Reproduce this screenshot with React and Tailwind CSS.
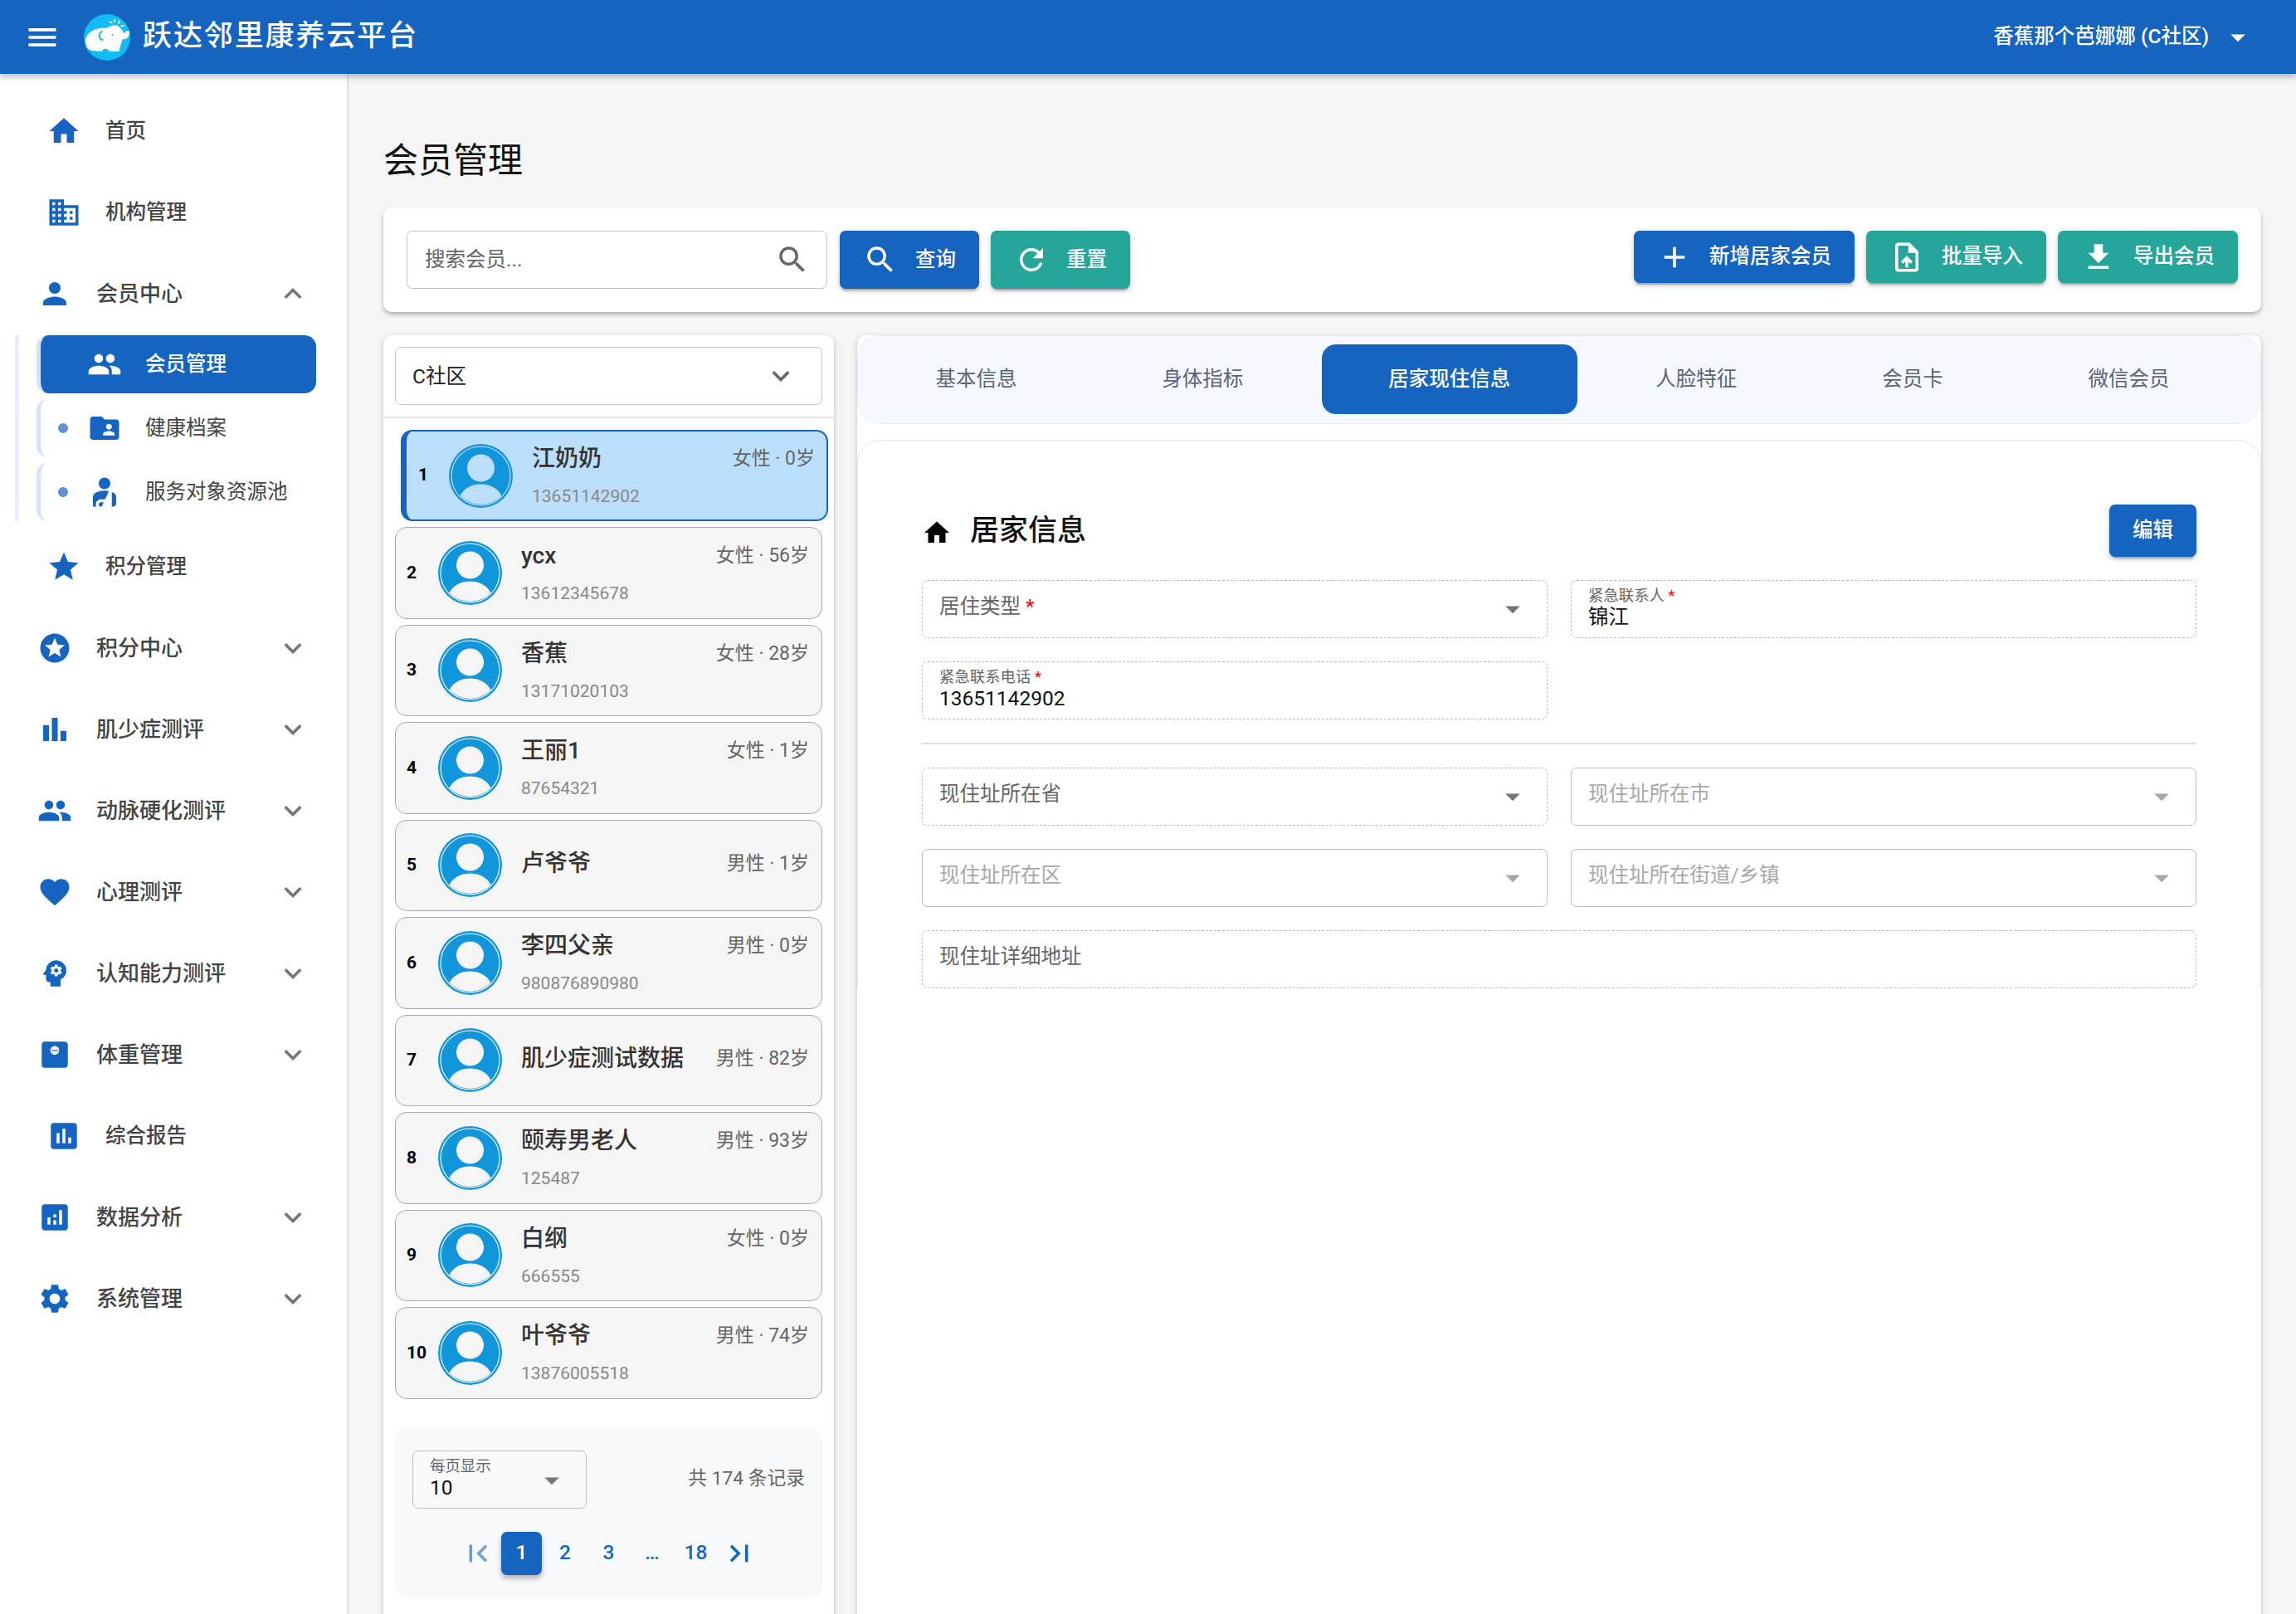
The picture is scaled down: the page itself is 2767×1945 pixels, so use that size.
import React from "react";
import {
  MdMenu, MdHome, MdDomain, MdPerson, MdPeople, MdFolderShared, MdPersonalInjury, MdStar, MdStars,
  MdBarChart, MdFavorite, MdPsychology, MdMonitorWeight, MdAssessment, MdAnalytics, MdSettings,
  MdExpandMore, MdExpandLess, MdArrowDropDown, MdSearch, MdRefresh, MdAdd, MdUploadFile, MdFileDownload,
  MdFirstPage, MdLastPage,
} from "react-icons/md";

const topItems = [
  { label: "积分中心", Icon: MdStars },
  { label: "肌少症测评", Icon: MdBarChart },
  { label: "动脉硬化测评", Icon: MdPeople },
  { label: "心理测评", Icon: MdFavorite },
  { label: "认知能力测评", Icon: MdPsychology },
  { label: "体重管理", Icon: MdMonitorWeight },
  { label: "综合报告", Icon: MdAssessment, leaf: true },
  { label: "数据分析", Icon: MdAnalytics },
  { label: "系统管理", Icon: MdSettings },
];

const members = [
  { name: "江奶奶", info: "女性 · 0岁", phone: "13651142902" },
  { name: "ycx", info: "女性 · 56岁", phone: "13612345678" },
  { name: "香蕉", info: "女性 · 28岁", phone: "13171020103" },
  { name: "王丽1", info: "女性 · 1岁", phone: "87654321" },
  { name: "卢爷爷", info: "男性 · 1岁", phone: "" },
  { name: "李四父亲", info: "男性 · 0岁", phone: "980876890980" },
  { name: "肌少症测试数据", info: "男性 · 82岁", phone: "" },
  { name: "颐寿男老人", info: "男性 · 93岁", phone: "125487" },
  { name: "白纲", info: "女性 · 0岁", phone: "666555" },
  { name: "叶爷爷", info: "男性 · 74岁", phone: "13876005518" },
];

const tabs = ["基本信息", "身体指标", "居家现住信息", "人脸特征", "会员卡", "微信会员"];

const Logo = () => (
  <svg width="56" height="56" viewBox="20 20 168 168" className="shrink-0">
    <circle cx="104" cy="104" r="84" fill="#12bdf6" />
    <path
      d="M28 130C20 105 40 78 75 72C90 68 100 72 108 68C125 55 150 60 160 80C164 90 172 92 172 80L184 80C188 100 175 115 160 110C156 125 150 140 148 155L112 155C108 145 95 142 88 150L84 155L50 152C40 148 30 145 28 130Z"
      fill="#fff"
    />
    <path d="M88 82C72 88 72 110 90 114" fill="none" stroke="#12bdf6" strokeWidth="6" />
    <circle cx="124" cy="95" r="3" fill="#12bdf6" />
    <g fill="#fff">
      <ellipse cx="118" cy="49" rx="6" ry="3" />
      <ellipse cx="131" cy="44" rx="3" ry="7" />
      <ellipse cx="147" cy="49" rx="3" ry="7" />
      <ellipse cx="160" cy="62" rx="7" ry="3" />
      <ellipse cx="140" cy="63" rx="3" ry="4" />
    </g>
  </svg>
);

const Avatar = ({ light }) => (
  <svg width="77" height="77" viewBox="-38.5 -38.5 77 77" className="shrink-0">
    <circle r="38.5" fill="#1296db" />
    <circle r="35.5" fill="none" strokeWidth="1.2" className={light} stroke="currentColor" />
    <circle cy="-9.5" r="16.5" fill="currentColor" className={light} />
    <path d="M-25 24C-20 14-10 10 0 10C10 10 20 14 25 24A35 35 0 0 1-25 24Z" fill="currentColor" className={light} />
  </svg>
);

const NavRow = ({ label, Icon, leaf, open }) => (
  <div className={`flex h-[84px] items-center mb-[14px] pr-[44px] ${leaf ? "pl-[56px]" : "pl-[45px]"}`}>
    <Icon size={42} className="text-[#1565c0] shrink-0" />
    {leaf ? (
      <span className="ml-[29px] flex-1 pt-[1px] text-[24.5px] font-medium text-[#444]">{label}</span>
    ) : (
      <span className="ml-[29px] flex-1 text-[26px] font-medium text-[#444]">{label}</span>
    )}
    {!leaf && (open ? <MdExpandLess size={42} className="text-[#757575]" /> : <MdExpandMore size={42} className="text-[#757575]" />)}
  </div>
);

const SubRow = ({ label, Icon, active }) => (
  <div
    className={`flex h-[70px] items-center rounded-[14px] border-l-[5px] border-[#d6e2f6] pl-[21px] ${
      active ? "bg-[#1565c0] text-white" : "text-[#444]"
    }`}
  >
    <span className={`size-[12px] rounded-full bg-[#5e92d3] ${active ? "invisible" : ""}`} />
    <Icon size={42} className={`ml-[23px] ${active ? "text-white" : "text-[#1565c0]"}`} />
    <span className={`ml-[28px] text-[24.5px] ${active ? "font-medium" : ""}`}>{label}</span>
  </div>
);

const ActionButton = ({ Icon, label, color, tall }) => (
  <button
    className={`flex items-center gap-[21px] whitespace-nowrap rounded-[7px] px-[28px] text-[24.5px] font-medium text-white shadow-[0_5px_2px_-3px_rgba(0,0,0,0.2),0_3px_4px_0_rgba(0,0,0,0.14),0_2px_9px_0_rgba(0,0,0,0.12)] ${color} ${
      tall ? "h-[70px]" : "h-[63px]"
    }`}
  >
    <Icon size={42} />
    {label}
  </button>
);

const MemberItem = ({ index, member, active }) => (
  <div
    className={`flex items-center rounded-[14px] ${
      active
        ? "h-[110px] translate-x-[7px] border-y-2 border-r-2 border-l-[7px] border-[#1565c0] bg-[#bbdefb] pl-[14px] pr-[14px]"
        : "h-[110.5px] border-[1.75px] border-[#a8a8a8] bg-[#f5f5f5] pl-[13px] pr-[15px]"
    }`}
  >
    <span className={`shrink-0 text-[21px] font-bold text-black ${active ? "w-[37px]" : "w-[38px]"}`}>{index}</span>
    <Avatar light={active ? "text-[#bbdefb]" : "text-[#f5f5f5]"} />
    <div className="ml-[23px] min-w-0 flex-1">
      <div className={`flex h-[39px] items-center justify-between ${member.phone ? "pt-[1px]" : "pb-[3px]"}`}>
        <span className="text-[28px] font-medium text-[#333]">{member.name}</span>
        <span className="text-[23px] text-[#666]">{member.info}</span>
      </div>
      {member.phone && (
        <div className="mt-[11px] h-[30px] text-[21px] leading-[30px] text-[#888]">{member.phone}</div>
      )}
    </div>
  </div>
);

const SelectField = ({ label, required, disabled, dashed }) => (
  <div
    className={`flex h-[70px] items-center justify-between rounded-[7px] border pl-[20px] pr-[20px] ${
      dashed ? "border-dashed border-[#bdbdbd]" : "border-[#bdbdbd]"
    }`}
  >
    <span className={`pb-[5px] text-[24.5px] ${disabled ? "text-[#a8a8a8]" : "text-[#666]"}`}>
      {label}
      {required && <span className="text-[#f00]"> *</span>}
    </span>
    <MdArrowDropDown size={42} className={disabled ? "text-[#a8a8a8]" : "text-[#757575]"} />
  </div>
);

const TextField = ({ label, value }) => (
  <div className="flex h-[70px] flex-col rounded-[7px] border border-dashed border-[#bdbdbd] pl-[20px] pt-[6px]">
    <span className="text-[18.4px] leading-[24px] text-[#666]">
      {label}
      <span className="text-[#f00]"> *</span>
    </span>
    <span className="text-[24.5px] leading-[28px] text-[#111]">{value}</span>
  </div>
);

const PageButton = ({ children, current, dim }) => (
  <button
    className={`flex h-[52px] w-[49px] items-center justify-center rounded-[7px] text-[24.5px] font-medium ${
      current ? "bg-[#1565c0] text-white shadow-[0_4px_6px_rgba(0,0,0,0.3)]" : "text-[#1565c0]"
    } ${dim ? "opacity-60" : ""}`}
  >
    {children}
  </button>
);

export default function App() {
  return (
    <div className="flex h-screen flex-col overflow-hidden bg-[#f5f5f5] [font-family:Roboto,'Noto_Sans_CJK_SC',sans-serif]">
      {/* top bar */}
      <header className="relative z-10 flex h-[89px] shrink-0 items-center bg-[#1565c0] pl-[29px] pr-[49px] text-white shadow-[0_4px_7px_rgba(0,0,0,0.25)]">
        <MdMenu size={44} />
        <div className="ml-[28px]"><Logo /></div>
        <span className="ml-[15px] flex-1 text-[35px] font-medium tracking-[1.9px]">跃达邻里康养云平台</span>
        <span className="text-[24.5px] font-medium">香蕉那个芭娜娜 (C社区)</span>
        <MdArrowDropDown size={42} className="ml-[14px]" />
      </header>

      <div className="flex min-h-0 flex-1">
        {/* sidebar */}
        <aside className="w-[420px] shrink-0 border-r-2 border-[#e0e0e0] bg-white pt-[27px]">
          <NavRow label="首页" Icon={MdHome} leaf />
          <NavRow label="机构管理" Icon={MdDomain} leaf />
          <div className="pb-[13px]">
            <div className="mb-[-6px]"><NavRow label="会员中心" Icon={MdPerson} open /></div>
            <div className="ml-[18px] flex w-[363px] flex-col gap-[7px] border-l-[5px] border-[#e6eefb] pl-[21px]">
              <SubRow label="会员管理" Icon={MdPeople} active />
              <SubRow label="健康档案" Icon={MdFolderShared} />
              <SubRow label="服务对象资源池" Icon={MdPersonalInjury} />
            </div>
          </div>
          <NavRow label="积分管理" Icon={MdStar} leaf />
          {topItems.map((item) => (
            <NavRow key={item.label} {...item} />
          ))}
        </aside>

        {/* main */}
        <main className="min-w-0 flex-1 pl-[42px] pr-[42px]">
          <h1 className="mt-[77px] h-[56px] text-[42px] leading-[56px] text-[#111]">会员管理</h1>

          <div className="mt-[28px] flex items-start rounded-[10px] bg-white p-[28px] shadow-[0_3px_5px_rgba(0,0,0,0.28)]">
            <div className="flex h-[70px] w-[507px] items-center justify-between rounded-[7px] border-[1.5px] border-[#c4c4c4] pl-[21px] pr-[20px]">
              <span className="text-[24.5px] text-[#666]">搜索会员...</span>
              <MdSearch size={42} className="text-[#666]" />
            </div>
            <div className="ml-[15px]"><ActionButton Icon={MdSearch} label="查询" color="bg-[#1565c0]" tall /></div>
            <div className="ml-[14px]"><ActionButton Icon={MdRefresh} label="重置" color="bg-[#26a69a]" tall /></div>
            <div className="ml-auto flex gap-[14px]">
              <ActionButton Icon={MdAdd} label="新增居家会员" color="bg-[#1565c0]" />
              <ActionButton Icon={MdUploadFile} label="批量导入" color="bg-[#26a69a]" />
              <ActionButton Icon={MdFileDownload} label="导出会员" color="bg-[#26a69a]" />
            </div>
          </div>

          <div className="mt-[28px] flex min-h-[1600px] items-stretch gap-[28px]">
            {/* member list */}
            <section className="w-[543px] shrink-0 rounded-[10px] bg-white shadow-[0_2px_6px_rgba(0,0,0,0.22)]">
              <div className="px-[14px] pt-[14px]">
                <div className="flex h-[70px] items-center justify-between rounded-[7px] border-[1.5px] border-[#c4c4c4] pl-[20px] pr-[28px]">
                  <span className="pt-[2px] text-[24.5px] text-[#222]">C社区</span>
                  <MdExpandMore size={42} className="text-[#666]" />
                </div>
              </div>
              <div className="mt-[14px] h-[2px] bg-[#e4e4e4]" />
              <div className="flex flex-col gap-[7px] px-[14px] pt-[14px]">
                {members.map((m, i) => (
                  <MemberItem key={m.name} index={i + 1} member={m} active={i === 0} />
                ))}
              </div>
              <div className="mx-[14px] mt-[34px] rounded-[14px] bg-[#f8f9fa] px-[21px] py-[28px]">
                <div className="flex items-center justify-between">
                  <div className="relative flex h-[70px] w-[210px] flex-col rounded-[7px] border border-[#bdbdbd] pl-[20px] pt-[6px]">
                    <span className="text-[18.4px] leading-[24px] text-[#666]">每页显示</span>
                    <span className="text-[24.5px] leading-[28px] text-[#111]">10</span>
                    <MdArrowDropDown size={42} className="absolute right-[20px] top-[14px] text-[#757575]" />
                  </div>
                  <span className="text-[22.75px] text-[#666]">共 174 条记录</span>
                </div>
                <div className="mt-[28px] flex items-center justify-center gap-[3.5px]">
                  <PageButton dim><MdFirstPage size={42} /></PageButton>
                  <PageButton current>1</PageButton>
                  <PageButton>2</PageButton>
                  <PageButton>3</PageButton>
                  <PageButton>…</PageButton>
                  <PageButton>18</PageButton>
                  <PageButton><MdLastPage size={42} /></PageButton>
                </div>
              </div>
            </section>

            {/* detail panel */}
            <section className="min-w-0 flex-1 rounded-[10px] bg-white shadow-[0_2px_6px_rgba(0,0,0,0.22)]">
              <div className="flex h-[107px] items-center gap-[14px] rounded-[28px] border border-[#e8edf8] bg-[#f5f8ff] pl-[13px] pr-[29px] pb-[1px]">
                {tabs.map((tab, i) => (
                  <div
                    key={tab}
                    className={`flex h-[84px] flex-auto items-center justify-center whitespace-nowrap rounded-[17px] px-[80px] text-[24.5px] ${
                      i === 2 ? "bg-[#1565c0] font-medium text-white" : "text-[#5a6478]"
                    }`}
                  >
                    {tab}
                  </div>
                ))}
              </div>

              <div className="mt-[19px] rounded-t-[28px] border-x border-t border-[#e6e8f0] px-[77px] pt-[77px]">
                <div className="flex h-[63px] items-center justify-between">
                  <div className="flex items-center">
                    <MdHome size={36} className="mt-[4px] text-black" />
                    <span className="ml-[22px] pt-[2px] text-[35px] font-medium text-[#111]">居家信息</span>
                  </div>
                  <button className="h-[63px] w-[105px] rounded-[7px] bg-[#1565c0] text-[24.5px] font-medium text-white shadow-[0_5px_2px_-3px_rgba(0,0,0,0.2),0_3px_4px_0_rgba(0,0,0,0.14),0_2px_9px_0_rgba(0,0,0,0.12)]">
                    编辑
                  </button>
                </div>

                <div className="mt-[28px] grid grid-cols-2 gap-[28px]">
                  <SelectField label="居住类型" required dashed />
                  <TextField label="紧急联系人" value="锦江" />
                  <TextField label="紧急联系电话" value="13651142902" />
                </div>

                <div className="my-[28px] h-[2px] bg-[#e0e0e0]" />

                <div className="grid grid-cols-2 gap-[28px]">
                  <SelectField label="现住址所在省" dashed />
                  <SelectField label="现住址所在市" disabled />
                  <SelectField label="现住址所在区" disabled />
                  <SelectField label="现住址所在街道/乡镇" disabled />
                  <div className="col-span-2 flex h-[70px] items-center rounded-[7px] border border-dashed border-[#bdbdbd] pl-[20px]">
                    <span className="pb-[5px] text-[24.5px] text-[#666]">现住址详细地址</span>
                  </div>
                </div>
              </div>
            </section>
          </div>
        </main>
      </div>
    </div>
  );
}
